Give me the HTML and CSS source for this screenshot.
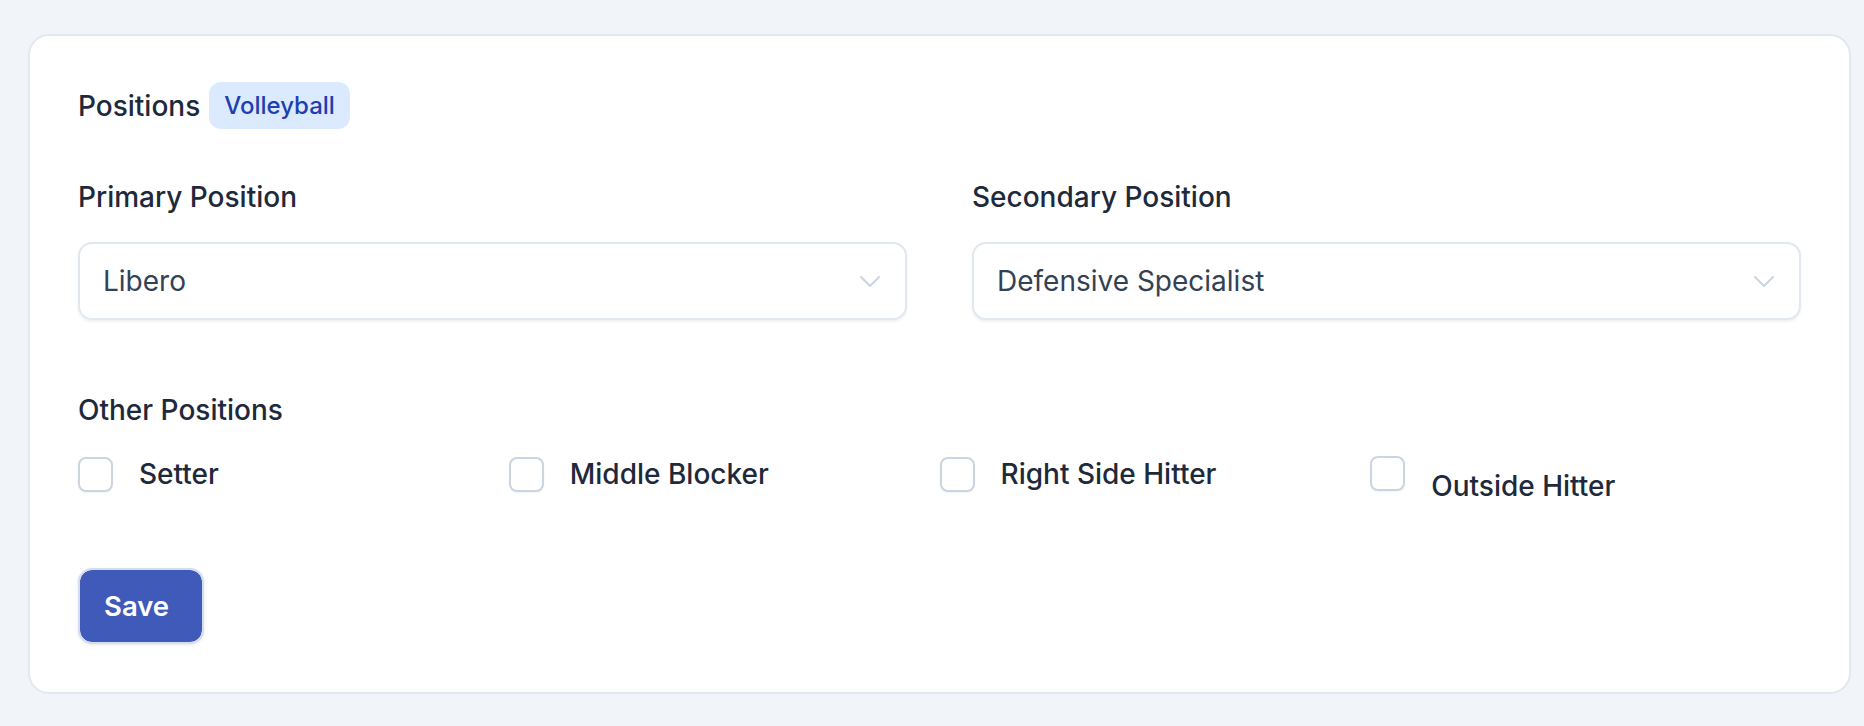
FILE: index.html
```html
<!DOCTYPE html>
<html lang="en">
<head>
  <meta charset="UTF-8">
  <meta name="viewport" content="width=device-width, initial-scale=1.0">
  <title>Positions</title>
  <link rel="stylesheet" href="styles.css">
</head>
<body>
  <div class="card">
    <div class="card-header">
      <h3>Positions</h3>
      <span class="badge">Volleyball</span>
    </div>

    <div class="selects">
      <div class="field">
        <label for="primary">Primary Position</label>
        <div class="select-wrap">
          <select id="primary">
            <option>Libero</option>
            <option>Setter</option>
            <option>Middle Blocker</option>
          </select>
          <svg class="chevron" width="20" height="11" viewBox="0 0 20 11"><path d="M1 1 L10 10 L19 1" fill="none" stroke="#cbd5e1" stroke-width="2" stroke-linecap="round" stroke-linejoin="round"/></svg>
        </div>
      </div>
      <div class="field">
        <label for="secondary">Secondary Position</label>
        <div class="select-wrap">
          <select id="secondary">
            <option>Defensive Specialist</option>
            <option>Outside Hitter</option>
          </select>
          <svg class="chevron" width="20" height="11" viewBox="0 0 20 11"><path d="M1 1 L10 10 L19 1" fill="none" stroke="#cbd5e1" stroke-width="2" stroke-linecap="round" stroke-linejoin="round"/></svg>
        </div>
      </div>
    </div>

    <div class="other">
      <div class="other-title">Other Positions</div>
      <div class="checks">
        <label class="check"><input type="checkbox"><span>Setter</span></label>
        <label class="check"><input type="checkbox"><span>Middle Blocker</span></label>
        <label class="check"><input type="checkbox"><span>Right Side Hitter</span></label>
        <label class="check check-low"><input type="checkbox"><span>Outside Hitter</span></label>
      </div>
    </div>

    <button class="save">Save</button>
  </div>
</body>
</html>
```

FILE: styles.css
```css
body {margin: 0; padding: 34px 13px 32px 28px; background-color: #f1f5f9; font-family: Inter, "Noto Sans", sans-serif; color: #1e293b;}
.card {background: #fff; border: 2px solid #e2e8f0; border-radius: 21px; padding: 46px 48px 48px 48px;}
.card-header {display: flex; align-items: center; gap: 9px; height: 47px;}
.card-header h3 {margin: 0; font-size: 28px; font-weight: 500; line-height: 42px;}
.badge {display: flex; align-items: center; height: 47px; padding: 0 15px; box-sizing: border-box; background: #dbeafe; color: #1e40af; font-size: 24px; font-weight: 500; border-radius: 12px;}
.selects {display: grid; grid-template-columns: 1fr 1fr; column-gap: 65px; margin-top: 47px;}
.field label {display: block; font-size: 28px; font-weight: 500; line-height: 42px; margin-bottom: 24px;}
.select-wrap {position: relative;}
.select-wrap select {appearance: none; -webkit-appearance: none; width: 100%; height: 78px; padding: 0 60px 0 23px; font-family: inherit; font-size: 28px; color: #334155; background: #fff; border: 2px solid #e2e8f0; border-radius: 14px; box-shadow: 0 2px 3px rgba(15,23,42,0.06); box-sizing: border-box; outline: none;}
.chevron {position: absolute; right: 27px; top: 34px; pointer-events: none;}
.other {margin-top: 69px;}
.other-title {font-size: 28px; font-weight: 500; line-height: 42px;}
.checks {display: grid; grid-template-columns: repeat(4, 1fr); align-items: start; margin-top: 22px;}
.check {display: flex; align-items: center; gap: 26px; font-size: 28px; font-weight: 500; line-height: 42px;}
.check input {appearance: none; -webkit-appearance: none; margin: 0; width: 35px; height: 35px; flex-shrink: 0; border: 2px solid #cbd5e1; border-radius: 8px; background: #fff; box-shadow: 0 1px 2px rgba(15,23,42,0.05);}
.check-low {align-items: flex-start;}
.check-low input {margin-top: 3px;}
.check-low span {margin-top: 12px;}
.save {display: block; margin-top: 61px; height: 76px; padding: 0 33px 0 24px; background: #3f5ab9; color: #fff; border: 2px solid #d5dcee; border-radius: 14px; font-family: inherit; font-size: 27.5px; font-weight: 600; box-shadow: 0 1px 3px rgba(15,23,42,0.1); background-clip: padding-box;}
```
